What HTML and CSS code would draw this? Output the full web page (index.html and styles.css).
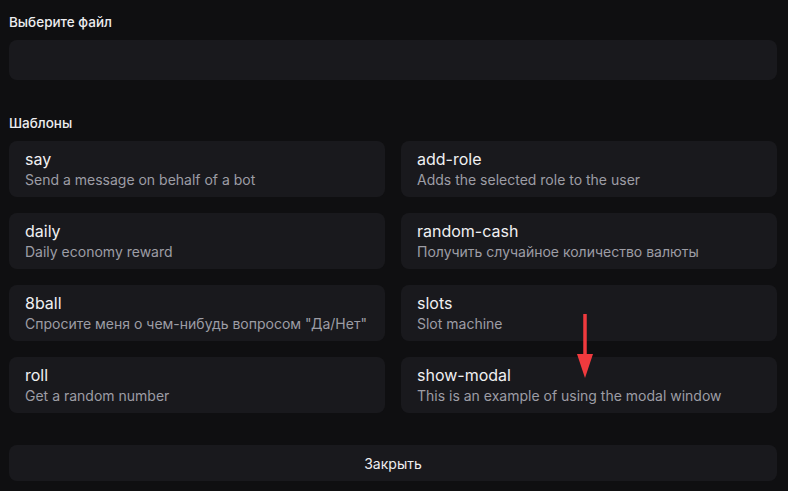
FILE: index.html
```html
<!DOCTYPE html>
<html lang="ru">
<head>
<meta charset="utf-8">
<title>Шаблоны</title>
<link rel="stylesheet" href="styles.css">
</head>
<body>
<div class="modal">
  <div class="field">
    <div class="label">Выберите файл</div>
    <div class="file-input"></div>
  </div>
  <div class="field templates">
    <div class="label">Шаблоны</div>
    <div class="grid">
      <div class="card"><div class="title">say</div><div class="desc">Send a message on behalf of a bot</div></div>
      <div class="card"><div class="title">add-role</div><div class="desc">Adds the selected role to the user</div></div>
      <div class="card"><div class="title">daily</div><div class="desc">Daily economy reward</div></div>
      <div class="card"><div class="title">random-cash</div><div class="desc">Получить случайное количество валюты</div></div>
      <div class="card"><div class="title">8ball</div><div class="desc">Спросите меня о чем-нибудь вопросом "Да/Нет"</div></div>
      <div class="card"><div class="title">slots</div><div class="desc">Slot machine</div></div>
      <div class="card"><div class="title">roll</div><div class="desc">Get a random number</div></div>
      <div class="card"><div class="title">show-modal</div><div class="desc">This is an example of using the modal window</div></div>
    </div>
  </div>
  <button class="close">Закрыть</button>
</div>
<svg class="arrow" width="20" height="68" viewBox="0 0 20 68">
  <line x1="10" y1="2" x2="10" y2="46" stroke="#f03a3e" stroke-width="3.5"/>
  <polygon points="2,42 18,42 10,66" fill="#f03a3e"/>
</svg>
</body>
</html>
```
FILE: styles.css
```css
html, body {
  margin: 0;
  padding: 0;
  background: #0f0f11;
}
body {
  font-family: Inter, "Noto Sans", sans-serif;
  color: #ececef;
  position: relative;
  width: 788px;
  height: 491px;
  overflow: hidden;
}
.modal {
  display: flex;
  flex-direction: column;
  padding: 12px 11px 0 9px;
}
.label {
  font-size: 13.5px;
  font-weight: 500;
  line-height: 20px;
  margin-bottom: 8px;
  color: #ededf0;
}
.file-input {
  height: 40px;
  border-radius: 8px;
  background: #19191d;
}
.templates {
  margin-top: 33px;
}
.grid {
  display: grid;
  grid-template-columns: 1fr 1fr;
  gap: 16px;
}
.card {
  height: 56px;
  box-sizing: border-box;
  padding: 8px 16px;
  border-radius: 8px;
  background: #19191d;
}
.title {
  font-size: 16px;
  font-weight: 400;
  line-height: 20px;
  color: #f0f0f2;
}
.desc {
  font-size: 14px;
  line-height: 21px;
  color: #9d9da5;
}
.close {
  margin-top: 32px;
  height: 36px;
  border: none;
  border-radius: 8px;
  background: #19191d;
  color: #ededf0;
  font-family: inherit;
  font-size: 14px;
  font-weight: 400;
}
.arrow {
  position: absolute;
  left: 575px;
  top: 312px;
}
```
